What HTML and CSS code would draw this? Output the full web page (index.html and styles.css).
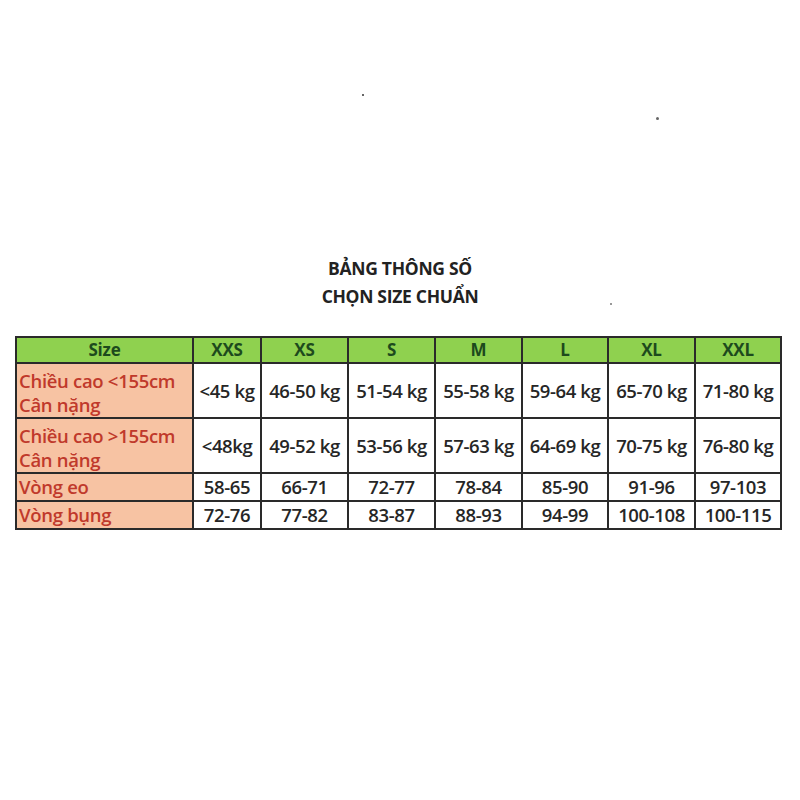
FILE: index.html
```html
<!DOCTYPE html>
<html lang="vi">
<head>
<meta charset="utf-8">
<title>Bảng thông số</title>
<link rel="stylesheet" href="styles.css">
</head>
<body>
<div class="page">
  <span class="speck speck-a"></span>
  <span class="speck speck-b"></span>
  <span class="speck speck-c"></span>
  <div class="title">
    <div>BẢNG THÔNG SỐ</div>
    <div>CHỌN SIZE CHUẨN</div>
  </div>
  <table class="sizes">
    <colgroup>
      <col class="c-label">
      <col class="c-xxs">
      <col class="c-87">
      <col class="c-87">
      <col class="c-87">
      <col class="c-86">
      <col class="c-87">
      <col class="c-86">
    </colgroup>
    <tr class="head">
      <td>Size</td><td>XXS</td><td>XS</td><td>S</td><td>M</td><td>L</td><td>XL</td><td>XXL</td>
    </tr>
    <tr class="tall">
      <td class="label">Chiều cao &lt;155cm<br>Cân nặng</td>
      <td>&lt;45 kg</td><td>46-50 kg</td><td>51-54 kg</td><td>55-58 kg</td><td>59-64 kg</td><td>65-70 kg</td><td>71-80 kg</td>
    </tr>
    <tr class="tall">
      <td class="label">Chiều cao &gt;155cm<br>Cân nặng</td>
      <td>&lt;48kg</td><td>49-52 kg</td><td>53-56 kg</td><td>57-63 kg</td><td>64-69 kg</td><td>70-75 kg</td><td>76-80 kg</td>
    </tr>
    <tr class="short">
      <td class="label">Vòng eo</td>
      <td>58-65</td><td>66-71</td><td>72-77</td><td>78-84</td><td>85-90</td><td>91-96</td><td>97-103</td>
    </tr>
    <tr class="short">
      <td class="label">Vòng bụng</td>
      <td>72-76</td><td>77-82</td><td>83-87</td><td>88-93</td><td>94-99</td><td>100-108</td><td>100-115</td>
    </tr>
  </table>
</div>
</body>
</html>
```

FILE: styles.css
```css
* { box-sizing: border-box; }

html, body {
  margin: 0;
  padding: 0;
  background: #ffffff;
}

.page {
  position: relative;
  width: 800px;
  height: 800px;
  padding-top: 254px;
  font-family: "Open Sans", "Liberation Sans", sans-serif;
}

.speck {
  position: absolute;
  border-radius: 50%;
}
.speck-a { left: 362px; top: 94px; width: 2px; height: 2px; background: #333; }
.speck-b { left: 656px; top: 117px; width: 3px; height: 3px; background: #666; }
.speck-c { left: 610px; top: 303px; width: 2px; height: 2px; background: #777; }

.title {
  text-align: center;
  font-weight: 700;
  font-size: 17.5px;
  line-height: 28px;
  color: #222;
  letter-spacing: -0.3px;
}

.sizes {
  margin: 26px 0 0 15px;
  border-collapse: separate;
  border-spacing: 0;
  table-layout: fixed;
  width: 767px;
  border-top: 2px solid #2a2a2a;
  border-left: 2px solid #2a2a2a;
}

.c-label { width: 177px; }
.c-xxs { width: 68px; }
.c-87 { width: 87px; }
.c-86 { width: 86px; }

.sizes td {
  padding: 0;
  border-right: 2px solid #2a2a2a;
  border-bottom: 2px solid #2a2a2a;
  text-align: center;
  vertical-align: middle;
  font-size: 18.5px;
  font-weight: 600;
  color: #262626;
  white-space: nowrap;
  background: #ffffff;
  letter-spacing: -0.4px;
}

.head td {
  height: 26px;
  background: #8fd14f;
  color: #1d4a1d;
  font-weight: 700;
  font-size: 17px;
  line-height: 22px;
  letter-spacing: -0.2px;
}

.tall td { height: 55px; line-height: 24px; }
.short td { height: 28px; line-height: 24px; }

.sizes td.label {
  text-align: left;
  padding-left: 2px;
  background: #f7c3a3;
  color: #c0392b;
  font-weight: 600;
  letter-spacing: -0.3px;
}

.tall td.label { padding-top: 5px; }
```
